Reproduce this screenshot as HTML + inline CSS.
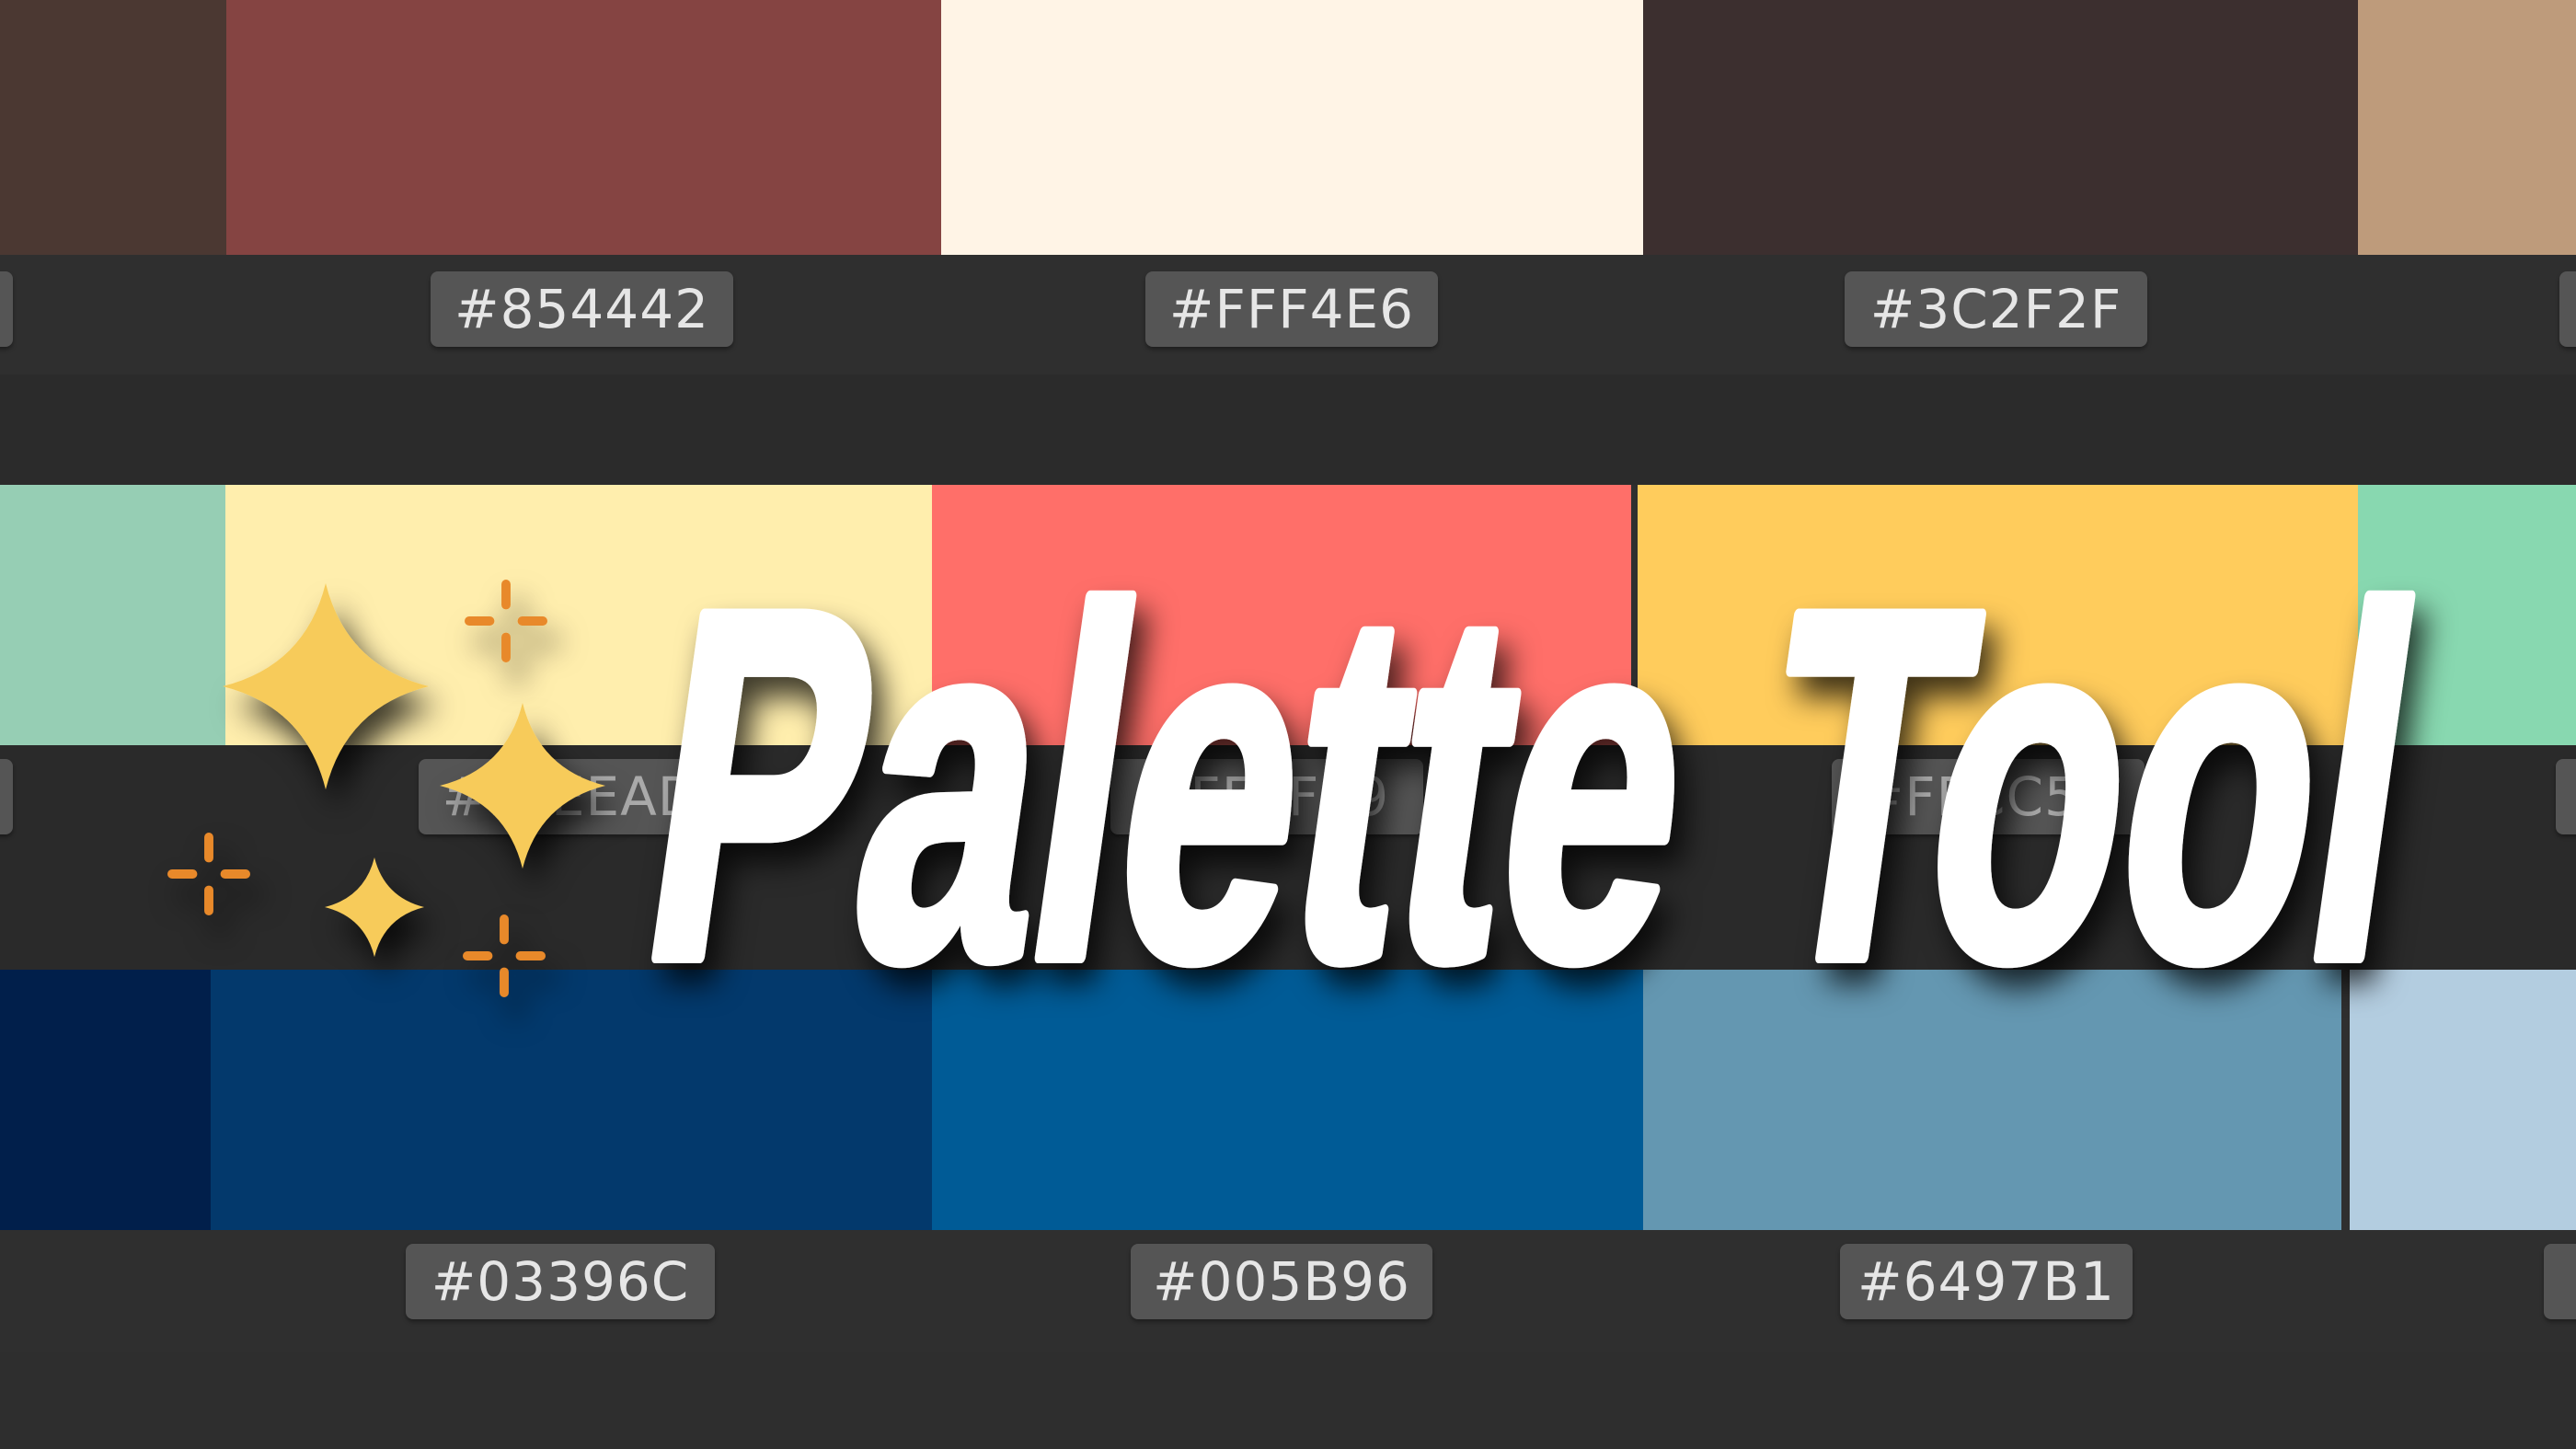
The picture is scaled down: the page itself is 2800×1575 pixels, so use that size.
<!DOCTYPE html>
<html><head><meta charset="utf-8"><style>
html,body{margin:0;padding:0}
body{width:2800px;height:1575px;background:#2f2f2f;position:relative;overflow:hidden;font-family:"DejaVu Sans","Liberation Sans",sans-serif}
.s{position:absolute}
.l{position:absolute;height:82px;background:#555;border-radius:8px;color:#e6e6e6;font-size:58px;line-height:82px;text-align:center;box-shadow:0 3px 4px rgba(0,0,0,.35);letter-spacing:1px}
</style></head><body>
<div class="s" style="left:0;top:407px;width:2800px;height:120px;background:#2b2b2b"></div>
<div class="s" style="left:0;top:810px;width:2800px;height:244px;background:#2a2a2a"></div>
<div class="s" style="left:0;top:1470px;width:2800px;height:105px;background:#2e2e2e"></div>
<!-- row1 -->
<div class="s" style="left:0;top:0;width:246px;height:277px;background:#4b3832"></div>
<div class="s" style="left:246px;top:0;width:777px;height:277px;background:#854442"></div>
<div class="s" style="left:1023px;top:0;width:763px;height:277px;background:#fff4e6"></div>
<div class="s" style="left:1786px;top:0;width:777px;height:277px;background:#3c2f2f"></div>
<div class="s" style="left:2563px;top:0;width:237px;height:277px;background:#be9b7b"></div>
<div class="l" style="left:-20px;top:295px;width:34px"></div>
<div class="l" style="left:468px;top:295px;width:329px">#854442</div>
<div class="l" style="left:1245px;top:295px;width:318px">#FFF4E6</div>
<div class="l" style="left:2005px;top:295px;width:329px">#3C2F2F</div>
<div class="l" style="left:2782px;top:295px;width:40px"></div>
<!-- row2 -->
<div class="s" style="left:0;top:527px;width:245px;height:283px;background:#96ceb4"></div>
<div class="s" style="left:245px;top:527px;width:768px;height:283px;background:#ffeead"></div>
<div class="s" style="left:1013px;top:527px;width:760px;height:283px;background:#ff6f69"></div>
<div class="s" style="left:1780px;top:527px;width:783px;height:283px;background:#ffcc5c"></div>
<div class="s" style="left:2563px;top:527px;width:237px;height:283px;background:#88d8b0"></div>
<div class="l" style="left:-20px;top:825px;width:34px"></div>
<div class="l" style="left:455px;top:825px;width:331px;color:#aaa">#FFEEAD</div>
<div class="l" style="left:1207px;top:825px;width:340px;color:#aaa">#FF6F69</div>
<div class="l" style="left:1991px;top:825px;width:340px;color:#aaa">#FFCC5C</div>
<div class="l" style="left:2778px;top:825px;width:40px"></div>
<!-- row3 -->
<div class="s" style="left:0;top:1054px;width:229px;height:283px;background:#011f4b"></div>
<div class="s" style="left:229px;top:1054px;width:784px;height:283px;background:#03396c"></div>
<div class="s" style="left:1013px;top:1054px;width:773px;height:283px;background:#005b96"></div>
<div class="s" style="left:1786px;top:1054px;width:759px;height:283px;background:#6497b1"></div>
<div class="s" style="left:2554px;top:1054px;width:246px;height:283px;background:#b3cde0"></div>
<div class="l" style="left:441px;top:1352px;width:336px">#03396C</div>
<div class="l" style="left:1229px;top:1352px;width:328px">#005B96</div>
<div class="l" style="left:2000px;top:1352px;width:318px">#6497B1</div>
<div class="l" style="left:2765px;top:1352px;width:60px"></div>

<svg class="s" style="left:0;top:0" width="2800" height="1575" viewBox="0 0 2800 1575">
<defs>
<filter id="sh" x="-20%" y="-20%" width="140%" height="140%"><feDropShadow dx="12" dy="22" stdDeviation="16" flood-color="#000" flood-opacity="0.75"/></filter>
<path id="st" d="M0,-1 Q0.2,-0.2 1,0 Q0.2,0.2 0,1 Q-0.2,0.2 -1,0 Q-0.2,-0.2 0,-1Z"/>
<g id="pl"><rect x="-0.11" y="-1" width="0.22" height="0.72" rx="0.11"/><rect x="-0.11" y="0.28" width="0.22" height="0.72" rx="0.11"/><rect x="-1" y="-0.11" width="0.72" height="0.22" rx="0.11"/><rect x="0.28" y="-0.11" width="0.72" height="0.22" rx="0.11"/></g>
</defs>
<g filter="url(#sh)" fill="#f7cb5a">
<use href="#st" transform="translate(354,746) scale(112)"/>
<use href="#st" transform="translate(568,854) scale(90)"/>
<use href="#st" transform="translate(407,986) scale(54)"/>
</g>
<g filter="url(#sh)" fill="#e8892b">
<use href="#pl" transform="translate(550,675) scale(45)"/>
<use href="#pl" transform="translate(227,950) scale(45)"/>
<use href="#pl" transform="translate(548,1039) scale(45)"/>
</g>
<g filter="url(#sh)">
<text x="0" y="0" transform="translate(690,1040) skewX(-8)" font-family="Liberation Sans, sans-serif" font-weight="bold" font-size="540" fill="#fff" stroke="#fff" stroke-width="14" stroke-linejoin="round" textLength="1900" lengthAdjust="spacingAndGlyphs">Palette Tool</text>
</g>
</svg>
</body></html>
